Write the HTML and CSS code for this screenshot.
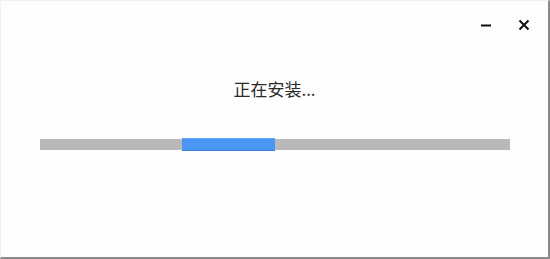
FILE: index.html
```html
<!DOCTYPE html>
<html lang="zh-CN">
<head>
<meta charset="utf-8">
<link rel="stylesheet" href="styles.css">
</head>
<body>
<div class="window">
  <div class="titlebar">
    <button class="ctl" aria-label="最小化">
      <svg width="12" height="12" viewBox="0 0 12 12"><path d="M1 6.5h10" stroke="#111" stroke-width="2"/></svg>
    </button>
    <button class="ctl" aria-label="关闭">
      <svg width="12" height="12" viewBox="0 0 12 12"><path d="M1.5 1.5l9 9M10.5 1.5l-9 9" stroke="#111" stroke-width="2"/></svg>
    </button>
  </div>
  <div class="content">
    <div class="status">正在安装...</div>
    <div class="track"><div class="bar"></div></div>
  </div>
</div>
</body>
</html>
```
FILE: styles.css
```css
html, body { margin: 0; padding: 0; }
body { width: 550px; height: 259px; background: #fdfdfd; font-family: "Noto Sans CJK SC", "Noto Sans", sans-serif; }
.window {
  box-sizing: border-box;
  width: 550px;
  height: 259px;
  background: #fdfdfd;
  border-top: 1px solid #f0f0f0;
  border-left: 1px solid #f0f0f0;
  border-right: 2px solid #8a8a8a;
  border-bottom: 2px solid #8a8a8a;
  display: flex;
  flex-direction: column;
}
.titlebar {
  display: flex;
  justify-content: flex-end;
  gap: 14px;
  padding: 18px 12px 0 0;
  height: 12px;
}
.ctl {
  width: 24px;
  height: 12px;
  padding: 0;
  border: 0;
  background: transparent;
  display: flex;
  align-items: center;
  justify-content: center;
}
.content {
  display: flex;
  flex-direction: column;
  align-items: center;
}
.status {
  margin-top: 47px;
  font-size: 17px;
  line-height: 22px;
  color: #2a2a2a;
}
.track {
  margin-top: 39px;
  width: 470px;
  height: 11px;
  background: #b9b9b9;
  display: flex;
  align-items: center;
  margin-left: 1px;
}
.bar {
  margin-left: 142px;
  width: 93px;
  height: 13px;
  background: #4b96f3;
  box-shadow: inset 0 -1px 0 #3a7fd8, inset 0 1px 0 #5fa4f6;
}
```
